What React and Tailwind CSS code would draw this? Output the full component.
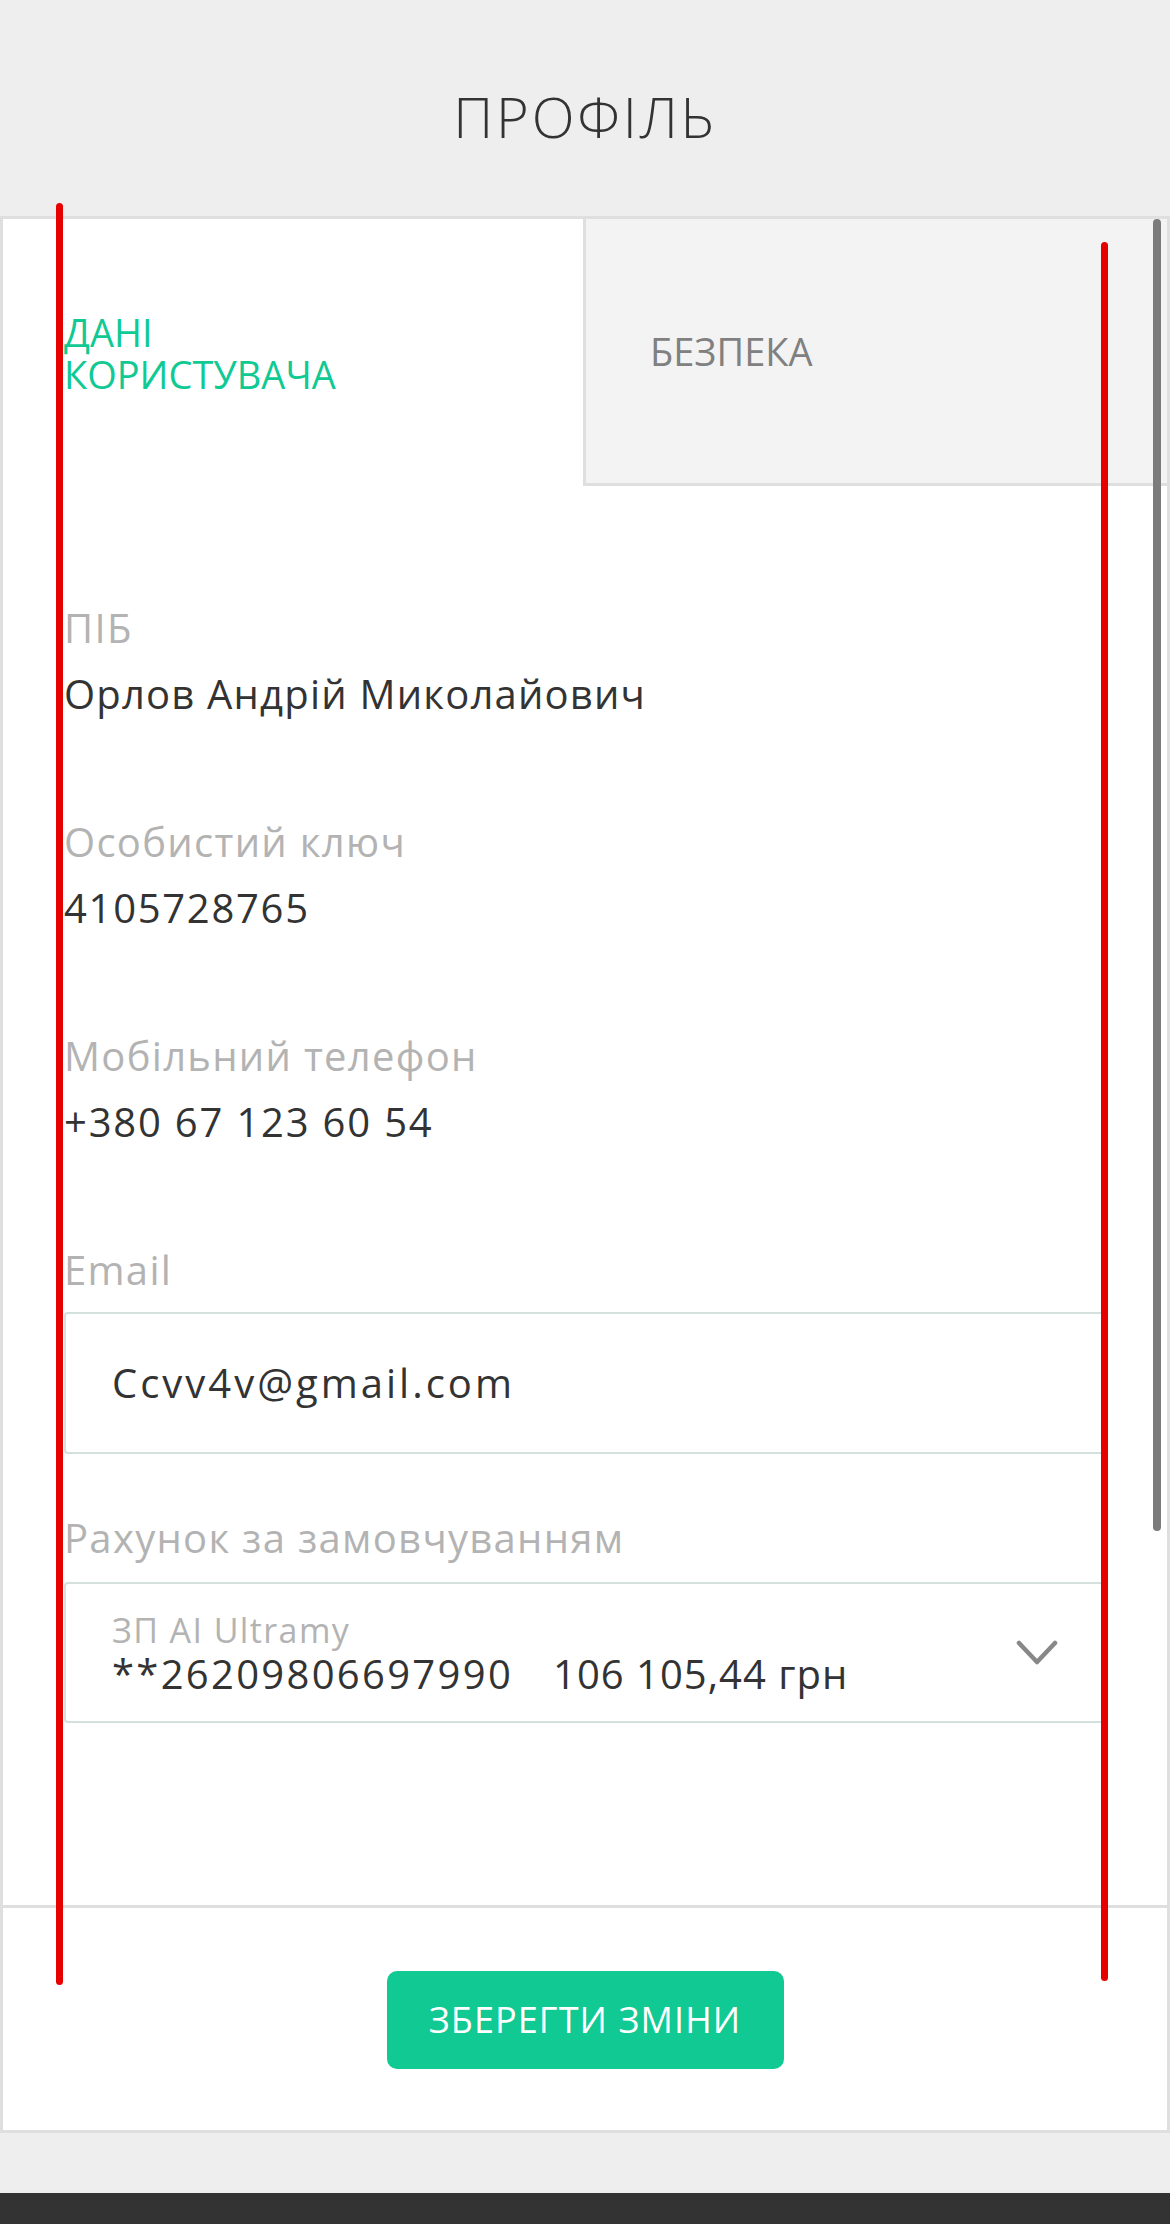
import React from "react";

const fields = [
  { label: "ПІБ", value: "Орлов Андрій Миколайович", track: "tracking-[1.2px]" },
  { label: "Особистий ключ", value: "4105728765", track: "tracking-[1.7px]" },
  { label: "Мобільний телефон", value: "+380 67 123 60 54", track: "tracking-[1.8px]" },
];

const Field = ({ label, value, track }) => (
  <div className="mb-[100px]">
    <div className="text-[40px] leading-[48px] tracking-[1.3px] text-[#b3b3b3]">{label}</div>
    <div className={"mt-[18px] text-[40px] leading-[48px] text-[#333333] " + track}>{value}</div>
  </div>
);

const App = () => {
  return (
    <div className="relative min-h-[2224px] bg-[#eeeeee] font-['Open_Sans',sans-serif] flex flex-col">
      {/* header */}
      <header className="h-[216px] pt-[88px] text-center">
        <h1 className="text-[56px] leading-[56px] font-light tracking-[2.8px] text-[#333333]">ПРОФІЛЬ</h1>
      </header>

      {/* card */}
      <section className="relative border-[3px] border-[#dfdfdf] bg-white">
        <div className="flex h-[267px]">
          <div className="w-[580px] flex flex-col justify-center pl-[61px] text-[38px] leading-[42px] text-[#10c993]">
            <span>ДАНІ</span>
            <span>КОРИСТУВАЧА</span>
          </div>
          <div className="flex-1 flex items-center pl-[64px] bg-[#f3f3f3] border-l-[3px] border-b-[3px] border-[#dfdfdf]">
            <span className="text-[38px] leading-[42px] text-[#808080]">БЕЗПЕКА</span>
          </div>
        </div>

        <div className="px-[61px] pt-[118px] pb-[182px]">
          {fields.map((f) => (
            <Field key={f.label} label={f.label} value={f.value} track={f.track} />
          ))}

          <div className="text-[40px] leading-[48px] tracking-[1.3px] text-[#b3b3b3]">Email</div>
          <div className="mt-[18px] h-[142px] flex items-center pl-[46px] border-2 border-[#d3e0de] rounded-[4px]">
            <span className="text-[40px] leading-[48px] tracking-[3px] text-[#333333]">Ccvv4v@gmail.com</span>
          </div>

          <div className="mt-[60px] text-[40px] leading-[48px] tracking-[1.3px] text-[#b3b3b3]">
            Рахунок за замовчуванням
          </div>
          <div className="mt-[20px] h-[141px] flex items-center justify-between pl-[46px] pr-[46px] border-2 border-[#d3e0de] rounded-[4px]">
            <div>
              <div className="text-[34px] leading-[42px] tracking-[1.4px] text-[#b3b3b3]">ЗП AI Ultramy</div>
              <div className="text-[40px] leading-[46px] text-[#333333]">
                <span className="tracking-[2.3px]">**26209806697990</span>
                <span className="ml-[40px] tracking-[1px]">106 105,44 грн</span>
              </div>
            </div>
            <svg width="42" height="26" viewBox="0 0 42 26" fill="none">
              <polyline
                points="3,3 21,22 39,3"
                stroke="#888888"
                strokeWidth="4.5"
                strokeLinecap="round"
                strokeLinejoin="round"
              />
            </svg>
          </div>
        </div>

        <div className="border-t-[3px] border-[#dfdfdf] pt-[63px] pb-[61px] flex justify-center">
          <button className="w-[397px] h-[98px] rounded-[10px] bg-[#10c993] text-white text-[36px] leading-[40px] tracking-[1.1px]">
            ЗБЕРЕГТИ ЗМІНИ
          </button>
        </div>

        {/* scrollbar */}
        <div className="absolute top-0 right-[6px] w-[8px] h-[1312px] rounded-full bg-[#7b7b7b]" />
      </section>

      <div className="h-[60px]" />
      <footer className="h-[31px] bg-[#333333]" />

      {/* red guide lines */}
      <div className="absolute left-[56px] top-[203px] w-[7px] h-[1782px] rounded-full bg-[#e60000]" />
      <div className="absolute left-[1101px] top-[242px] w-[7px] h-[1739px] rounded-full bg-[#e60000]" />
    </div>
  );
};

export default App;
